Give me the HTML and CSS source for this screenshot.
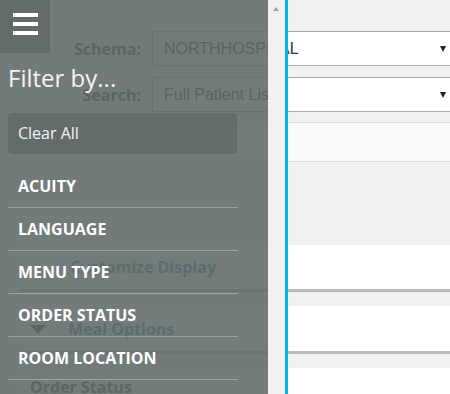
FILE: index.html
```html
<!DOCTYPE html>
<html>
<head>
<meta charset="utf-8">
<link rel="stylesheet" href="styles.css">
</head>
<body>
<div class="page">
  <div class="form">
    <div class="row">
      <label class="lbl">Schema:</label>
      <div class="select">NORTHHOSPITAL<span class="caret"></span></div>
    </div>
    <div class="row">
      <label class="lbl">Search:</label>
      <div class="select">Full Patient List<span class="caret"></span></div>
    </div>
  </div>
  <div class="tabs"></div>
  <div class="cards">
    <div class="card card-a"><span class="card-title teal">Customize Display</span></div>
    <div class="card card-b"><span class="tri"></span><span class="card-title teal">Meal Options</span></div>
    <div class="card card-c"><span class="card-title grey">Order Status</span></div>
  </div>
</div>

<aside class="drawer">
  <div class="drawer-body">
    <div class="menu-btn">
      <span class="bar"></span><span class="bar"></span><span class="bar"></span>
    </div>
    <div class="title">Filter by...</div>
    <div class="clear">Clear All</div>
    <ul class="filters">
      <li>ACUITY</li>
      <li>LANGUAGE</li>
      <li>MENU TYPE</li>
      <li>ORDER STATUS</li>
      <li>ROOM LOCATION</li>
    </ul>
  </div>
  <div class="scroll"><span class="up"></span></div>
</aside>
</body>
</html>
```

FILE: styles.css
```css
html, body {
  margin: 0;
  padding: 0;
}
body {
  width: 450px;
  height: 394px;
  overflow: hidden;
  background: #f1f1f1;
  font-family: "Open Sans", "Liberation Sans", sans-serif;
  position: relative;
}
.page {
  padding-top: 31px;
  height: 394px;
  box-sizing: border-box;
  overflow: hidden;
}
.row {
  display: flex;
  align-items: center;
  gap: 11px;
  margin-bottom: 11px;
}
.row + .row {
  margin-bottom: 0;
}
.lbl {
  width: 141px;
  text-align: right;
  font-weight: 700;
  font-size: 16px;
  color: #3a3a3a;
}
.select {
  flex: 1;
  height: 33px;
  border: 1px solid #aaaaaa;
  border-right-width: 0;
  background: #ffffff;
  font-family: "Liberation Sans", Arial, sans-serif;
  font-size: 16px;
  color: #333333;
  line-height: 33px;
  padding-left: 11px;
  position: relative;
}
.caret {
  position: absolute;
  left: 287px;
  top: 14px;
  width: 0;
  height: 0;
  border-left: 3.5px solid transparent;
  border-right: 3.5px solid transparent;
  border-top: 6px solid #222;
}
.tabs {
  margin-top: 10px;
  margin-left: 152px;
  height: 38px;
  background: #fafafa;
  border-top: 1px solid #dddddd;
  border-bottom: 1px solid #dddddd;
}
.cards {
  margin-top: 83px;
  margin-left: 20px;
  display: flex;
  flex-direction: column;
  gap: 14px;
}
.card {
  background: #ffffff;
  border-bottom: 3px solid #bbbbbb;
  display: flex;
  align-items: center;
}
.card-a {
  height: 44px;
  padding-left: 50px;
}
.card-b {
  height: 45px;
  padding-left: 10px;
}
.card-c {
  height: 45px;
  padding-left: 10px;
  align-items: flex-start;
  padding-top: 8px;
}
.card-title {
  font-weight: 700;
  font-size: 16px;
  line-height: 22px;
}
.teal {
  color: #2c86a2;
}
.grey {
  color: #444444;
}
.tri {
  width: 0;
  height: 0;
  border-left: 8px solid transparent;
  border-right: 8px solid transparent;
  border-top: 9px solid #3a3a3a;
  margin-right: 22px;
  margin-top: 2px;
}

/* drawer overlay */
.drawer {
  position: absolute;
  left: 0;
  top: 0;
  width: 285px;
  height: 394px;
  display: flex;
  border-right: 3px solid #0cb1e3;
}
.drawer-body {
  width: 268px;
  height: 100%;
  background: rgba(96, 105, 105, 0.88);
  display: flex;
  flex-direction: column;
}
.menu-btn {
  width: 50px;
  height: 53px;
  background: rgba(0, 0, 0, 0.12);
  box-sizing: border-box;
  padding: 13px 0 0 13px;
  display: flex;
  flex-direction: column;
  gap: 5px;
}
.bar {
  display: block;
  width: 25px;
  height: 4px;
  background: #ffffff;
}
.title {
  margin-top: 8px;
  padding-left: 8px;
  font-size: 24px;
  line-height: 33px;
  color: #f4f4f4;
  font-weight: 400;
}
.clear {
  margin: 19px 0 0 8px;
  width: 229px;
  height: 41px;
  box-sizing: border-box;
  padding-left: 10px;
  line-height: 41px;
  border-radius: 4px;
  background: rgba(0, 0, 0, 0.12);
  color: #f4f4f4;
  font-size: 16px;
}
.filters {
  list-style: none;
  margin: 11px 0 0 8px;
  padding: 0;
  width: 230px;
}
.filters li {
  height: 42px;
  line-height: 42px;
  padding-left: 10px;
  border-bottom: 1px solid rgba(255, 255, 255, 0.3);
  color: #ffffff;
  font-weight: 700;
  font-size: 16px;
}
.scroll {
  width: 17px;
  height: 100%;
  background: #f1f1f1;
  position: relative;
}
.up {
  position: absolute;
  left: 5px;
  top: 7px;
  width: 0;
  height: 0;
  border-left: 3.5px solid transparent;
  border-right: 3.5px solid transparent;
  border-bottom: 4px solid #a3a3a3;
}
```
